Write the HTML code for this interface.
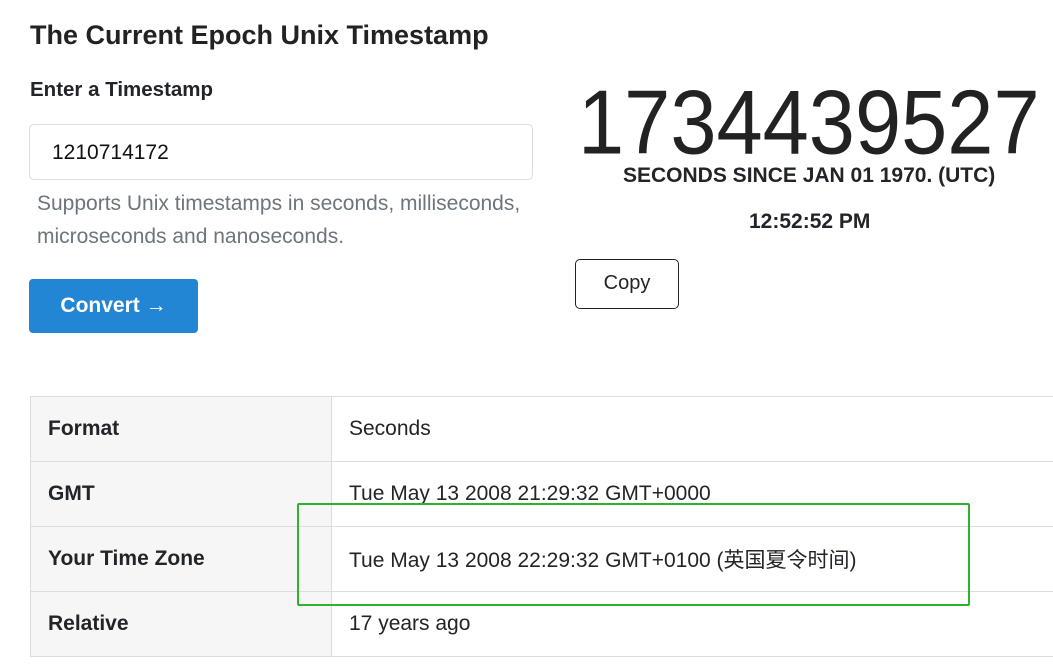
<!DOCTYPE html>
<html><head><meta charset="utf-8"><style>
body{margin:0;width:1053px;height:668px;overflow:hidden;background:#fff;font-family:"Liberation Sans","Noto Sans CJK SC",sans-serif;color:#212529;position:relative}
.a{position:absolute;white-space:nowrap}
h1{position:absolute;left:30px;top:20px;margin:0;font-size:27px;font-weight:bold;color:#222}
.lbl{left:30px;top:78px;font-size:20.5px;font-weight:bold}
.inp{position:absolute;left:29px;top:124px;width:504px;height:56px;border:1px solid #ddd;border-radius:5px;box-sizing:border-box;font-size:21px;padding:16px 0 0 22px;color:#111}
.help{left:37px;top:187px;font-size:21px;color:#6c757d;line-height:33px;white-space:normal;width:520px}
.btn{position:absolute;left:29px;top:279px;width:169px;height:54px;background:#2286d4;border-radius:4px;color:#fff;font-size:21px;font-weight:bold;text-align:center;line-height:54px}
.big{left:578px;top:70px;font-size:83px;color:#222;transform:scaleY(1.1);transform-origin:0 0}
.sec{left:623px;top:164px;font-size:21px;font-weight:bold}
.time{left:749px;top:210px;font-size:21px;font-weight:bold}
.copy{position:absolute;left:575px;top:259px;width:104px;height:50px;border:1.5px solid #222;border-radius:5px;box-sizing:border-box;text-align:center;line-height:46px;font-size:20px}
table{position:absolute;left:30px;top:396px;width:1040px;border-collapse:collapse;font-size:21px}
td{border:1px solid #ddd;height:64px;padding:0 17px}
td:first-child{width:266px;background:#f6f6f6;font-weight:bold}
.g{position:absolute;left:297px;top:503px;width:673px;height:103px;border:2.5px solid #2db32d;box-sizing:border-box;border-radius:2px}
</style></head><body>
<h1>The Current Epoch Unix Timestamp</h1>
<div class="a lbl">Enter a Timestamp</div>
<div class="inp">1210714172</div>
<div class="a help">Supports Unix timestamps in seconds, milliseconds, microseconds and nanoseconds.</div>
<div class="btn">Convert →</div>
<div class="a big">1734439527</div>
<div class="a sec">SECONDS SINCE JAN 01 1970. (UTC)</div>
<div class="a time">12:52:52 PM</div>
<div class="copy">Copy</div>
<table>
<tr><td>Format</td><td>Seconds</td></tr>
<tr><td>GMT</td><td>Tue May 13 2008 21:29:32 GMT+0000</td></tr>
<tr><td>Your Time Zone</td><td>Tue May 13 2008 22:29:32 GMT+0100 (英国夏令时间)</td></tr>
<tr><td>Relative</td><td>17 years ago</td></tr>
</table>
<div class="g"></div>
</body></html>
